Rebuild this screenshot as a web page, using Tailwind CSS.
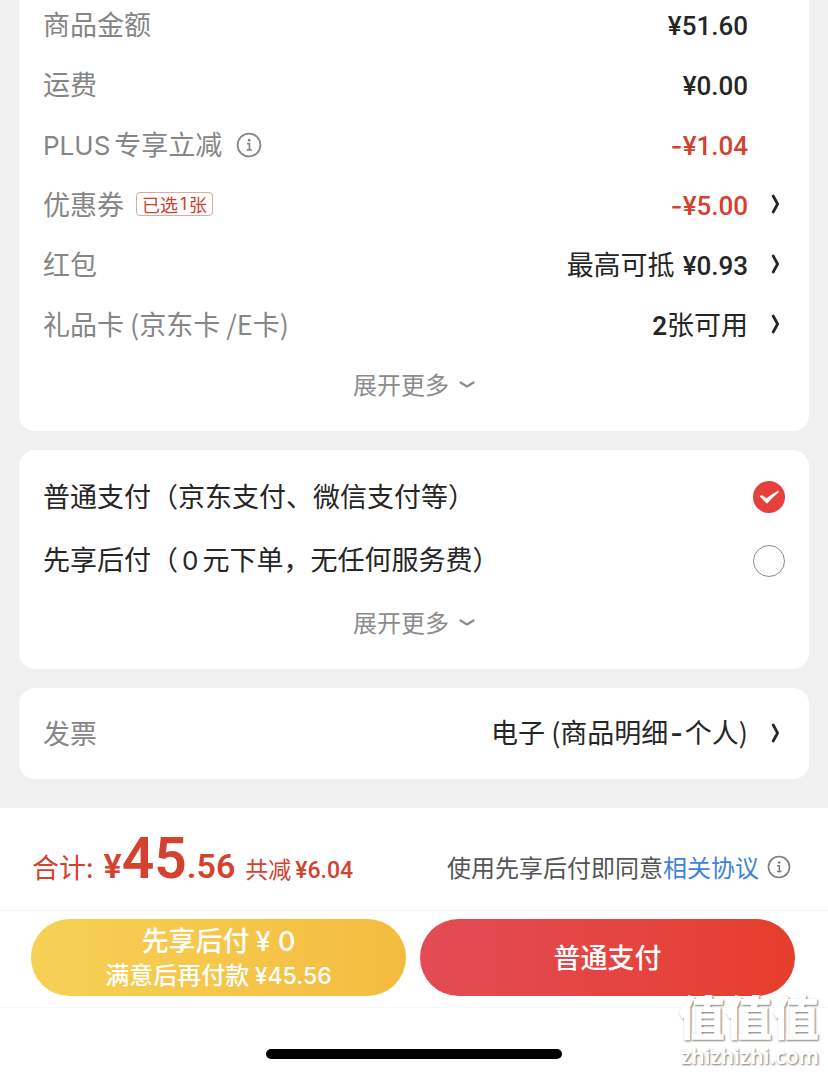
<!DOCTYPE html>
<html lang="zh-CN">

<head>
  <meta charset="UTF-8" />
  <meta name="viewport" content="width=device-width, initial-scale=1.0" />
  <title>确认订单</title>
  <script src="https://cdn.jsdelivr.net/npm/@tailwindcss/browser@4"></script>
</head>

<body class="relative min-h-screen flex flex-col overflow-x-hidden bg-[#f0f0f0] text-[27px] leading-[40px] text-[#262626] font-['Noto_Sans_CJK_SC',sans-serif]">

  <main class="flex-1 flex flex-col gap-[19px] px-[19px] pb-7 -mt-[5px]">

    <!-- Order amounts, first row sits under the scroll edge -->
    <section class="bg-white rounded-b-2xl px-6 pb-4">
      <ul>
        <li class="flex items-center justify-between h-[60px] pb-0.5 pr-[37px]">
          <span class="text-[#868686]">商品金额</span>
          <span class="font-['Roboto'] text-[26px] leading-[36px] pt-1 font-medium">¥51.60</span>
        </li>
        <li class="flex items-center justify-between h-[60px] pb-0.5 pr-[37px]">
          <span class="text-[#868686]">运费</span>
          <span class="font-['Roboto'] text-[26px] leading-[36px] pt-1 font-medium">¥0.00</span>
        </li>
        <li class="flex items-center justify-between h-[60px] pb-0.5 pr-[37px]">
          <span class="flex items-center text-[#868686]">
            <span class="font-['Inter'] text-[26px] pt-1 mr-1">PLUS</span>专享立减
            <button type="button" class="ml-3.5 pt-0.5" aria-label="PLUS专享立减说明">
              <svg class="size-[26px]" viewBox="0 0 26 26" fill="none" stroke="currentColor" stroke-width="1.8">
                <circle cx="13" cy="13" r="11.4" />
                <path d="M11 11.6h2.4v6M10.8 17.8h5" stroke-width="1.7" />
                <circle cx="13.2" cy="8.2" r="1.4" fill="currentColor" stroke="none" />
              </svg>
            </button>
          </span>
          <span class="font-['Roboto'] text-[26px] leading-[36px] pt-1 font-medium text-[#d4412f]"><span class="font-['Inter']">-</span>¥1.04</span>
        </li>
        <li>
          <button type="button" class="w-full h-[60px] pb-0.5 flex items-center justify-between">
            <span class="flex items-center gap-3 text-[#868686]">优惠券
              <span class="h-6 px-[5px] flex items-center rounded border border-[#e3a79f] text-[18px] leading-none text-[#c9422f]">已选<span class="font-['Inter'] text-[17px] mx-0.5">1</span>张</span>
            </span>
            <span class="flex items-center gap-[21px]">
              <span class="font-['Roboto'] text-[26px] leading-[36px] pt-1 font-medium text-[#d4412f]"><span class="font-['Inter']">-</span>¥5.00</span>
              <svg class="w-4 h-5" viewBox="0 0 16 20" fill="none" stroke="currentColor" stroke-width="2.8" stroke-linecap="round" stroke-linejoin="round">
                <path d="M4.2 2L8.6 10L4.2 18" />
              </svg>
            </span>
          </button>
        </li>
        <li>
          <button type="button" class="w-full h-[60px] pb-0.5 flex items-center justify-between">
            <span class="text-[#868686]">红包</span>
            <span class="flex items-center gap-[21px]">
              <span class="flex items-center gap-2">最高可抵<span class="font-['Roboto'] text-[26px] leading-[36px] pt-1 font-medium">¥0.93</span></span>
              <svg class="w-4 h-5" viewBox="0 0 16 20" fill="none" stroke="currentColor" stroke-width="2.8" stroke-linecap="round" stroke-linejoin="round">
                <path d="M4.2 2L8.6 10L4.2 18" />
              </svg>
            </span>
          </button>
        </li>
        <li>
          <button type="button" class="w-full h-[60px] pb-0.5 flex items-center justify-between">
            <span class="text-[#868686]">礼品卡 (京东卡 /E卡)</span>
            <span class="flex items-center gap-[21px]">
              <span class="flex items-center"><span class="font-['Roboto'] text-[26px] leading-[36px] pt-1 font-semibold">2</span>张可用</span>
              <svg class="w-4 h-5" viewBox="0 0 16 20" fill="none" stroke="currentColor" stroke-width="2.8" stroke-linecap="round" stroke-linejoin="round">
                <path d="M4.2 2L8.6 10L4.2 18" />
              </svg>
            </span>
          </button>
        </li>
      </ul>
      <button type="button" class="w-full h-[60px] pb-0.5 flex items-center justify-center gap-2.5 text-[24px] text-[#8c8c8c]">
        展开更多
        <svg class="w-4 h-2.5" viewBox="0 0 16 10" fill="none" stroke="currentColor" stroke-width="2.2" stroke-linecap="round" stroke-linejoin="round">
          <path d="M1.5 3.5L8 7.5L14.5 3.5" />
        </svg>
      </button>
    </section>

    <!-- Payment method -->
    <section class="bg-white rounded-2xl px-6 pt-[15px] pb-4">
      <div class="h-16 flex items-center justify-between">
        <label for="pay-normal" class="pb-0.5">普通支付（京东支付、微信支付等）</label>
        <span class="relative size-8">
          <input type="radio" name="pay" id="pay-normal" checked
            class="peer appearance-none block size-8 rounded-full border border-[#8c8c8c] checked:border-0 checked:bg-[#e5413a]">
          <svg class="absolute inset-0 size-8 hidden peer-checked:block pointer-events-none" viewBox="0 0 32 32" fill="#fff">
            <path d="M6.8 15.4Q8 13.8 9.4 14.6L13.6 17.2Q18.8 13.4 24 10.3Q25.6 9.7 25.6 10.9Q25.5 11.6 24.6 12.3Q19 16.8 15 21.7Q13.9 22.9 12.8 21.7Z" />
          </svg>
        </span>
      </div>
      <div class="h-16 flex items-center justify-between">
        <label for="pay-later" class="pb-0.5">先享后付（<span class="font-['Inter'] text-[26px] mx-1">0</span>元下单，无任何服务费）</label>
        <span class="relative size-8">
          <input type="radio" name="pay" id="pay-later"
            class="peer appearance-none block size-8 rounded-full border border-[#8c8c8c] checked:border-0 checked:bg-[#e5413a]">
          <svg class="absolute inset-0 size-8 hidden peer-checked:block pointer-events-none" viewBox="0 0 32 32" fill="#fff">
            <path d="M6.8 15.4Q8 13.8 9.4 14.6L13.6 17.2Q18.8 13.4 24 10.3Q25.6 9.7 25.6 10.9Q25.5 11.6 24.6 12.3Q19 16.8 15 21.7Q13.9 22.9 12.8 21.7Z" />
          </svg>
        </span>
      </div>
      <button type="button" class="w-full h-[60px] pb-0.5 flex items-center justify-center gap-2.5 text-[24px] text-[#8c8c8c]">
        展开更多
        <svg class="w-4 h-2.5" viewBox="0 0 16 10" fill="none" stroke="currentColor" stroke-width="2.2" stroke-linecap="round" stroke-linejoin="round">
          <path d="M1.5 3.5L8 7.5L14.5 3.5" />
        </svg>
      </button>
    </section>

    <!-- Invoice -->
    <section class="bg-white rounded-2xl px-6">
      <button type="button" class="w-full h-[91px] pb-0.5 flex items-center justify-between">
        <span class="text-[#868686]">发票</span>
        <span class="flex items-center gap-[21px]">
          <span>电子 (商品明细<span class="font-['Inter'] font-semibold mx-0.5">-</span>个人)</span>
          <svg class="w-4 h-5" viewBox="0 0 16 20" fill="none" stroke="currentColor" stroke-width="2.8" stroke-linecap="round" stroke-linejoin="round">
            <path d="M4.2 2L8.6 10L4.2 18" />
          </svg>
        </span>
      </button>
    </section>
  </main>

  <footer class="bg-white">
    <div class="h-[102px] pt-3 pl-8 pr-[37px] flex items-center justify-between">
      <p class="flex items-baseline text-[#d4412f] whitespace-nowrap">
        合计:
        <span class="ml-2.5 font-['Roboto'] text-[34px] font-semibold">¥</span>
        <span class="font-['Roboto'] text-[57px] font-semibold">45</span>
        <span class="font-['Roboto'] text-[34px] font-semibold">.56</span>
        <span class="ml-2.5 text-[23px]">共减</span>
        <span class="ml-1 font-['Roboto'] text-[23px] font-medium">¥6.04</span>
      </p>
      <p class="flex items-center pt-1 text-[24px] text-[#555] whitespace-nowrap">
        使用先享后付即同意<a href="#agreement" class="text-[#3f82dd]">相关协议</a>
        <button type="button" class="ml-2 text-[#7d7d7d]" aria-label="协议说明">
          <svg class="size-6" viewBox="0 0 26 26" fill="none" stroke="currentColor" stroke-width="1.8">
            <circle cx="13" cy="13" r="11.4" />
            <path d="M11 11.6h2.4v6M10.8 17.8h5" stroke-width="1.7" />
            <circle cx="13.2" cy="8.2" r="1.4" fill="currentColor" stroke="none" />
          </svg>
        </button>
      </p>
    </div>

    <div class="grid grid-cols-2 gap-3.5 pl-[31px] pr-[33px] pt-2 pb-[11px] border-y border-[#f8f8f8] text-white">
      <button type="button" class="h-[77px] rounded-full bg-linear-to-r from-[#f6d155] to-[#f4bc3f] flex flex-col items-center justify-center font-medium">
        <span class="leading-[32px]">先享后付 <span class="font-['Inter'] text-[27px]">¥ 0</span></span>
        <span class="text-[24px] leading-[32px]">满意后再付款 <span class="font-['Inter'] text-[23px]">¥45.56</span></span>
      </button>
      <button type="button" class="h-[77px] pb-0.5 rounded-full bg-linear-to-r from-[#e34b55] to-[#e63e2b] font-medium">普通支付</button>
    </div>

    <!-- Home indicator -->
    <div class="pt-[41px] pb-[15px]">
      <div class="w-[296px] h-2.5 mx-auto rounded-full bg-black"></div>
    </div>
  </footer>

  <!-- Watermark -->
  <div class="absolute right-[9px] bottom-1 text-white text-right pointer-events-none [text-shadow:1px_1px_2px_#777]">
    <p class="text-[47px] leading-[54px] font-black">值值值</p>
    <p class="font-['Noto_Sans'] text-[21px] leading-[28px] font-semibold">zhizhizhi.com</p>
  </div>

</body>

</html>
